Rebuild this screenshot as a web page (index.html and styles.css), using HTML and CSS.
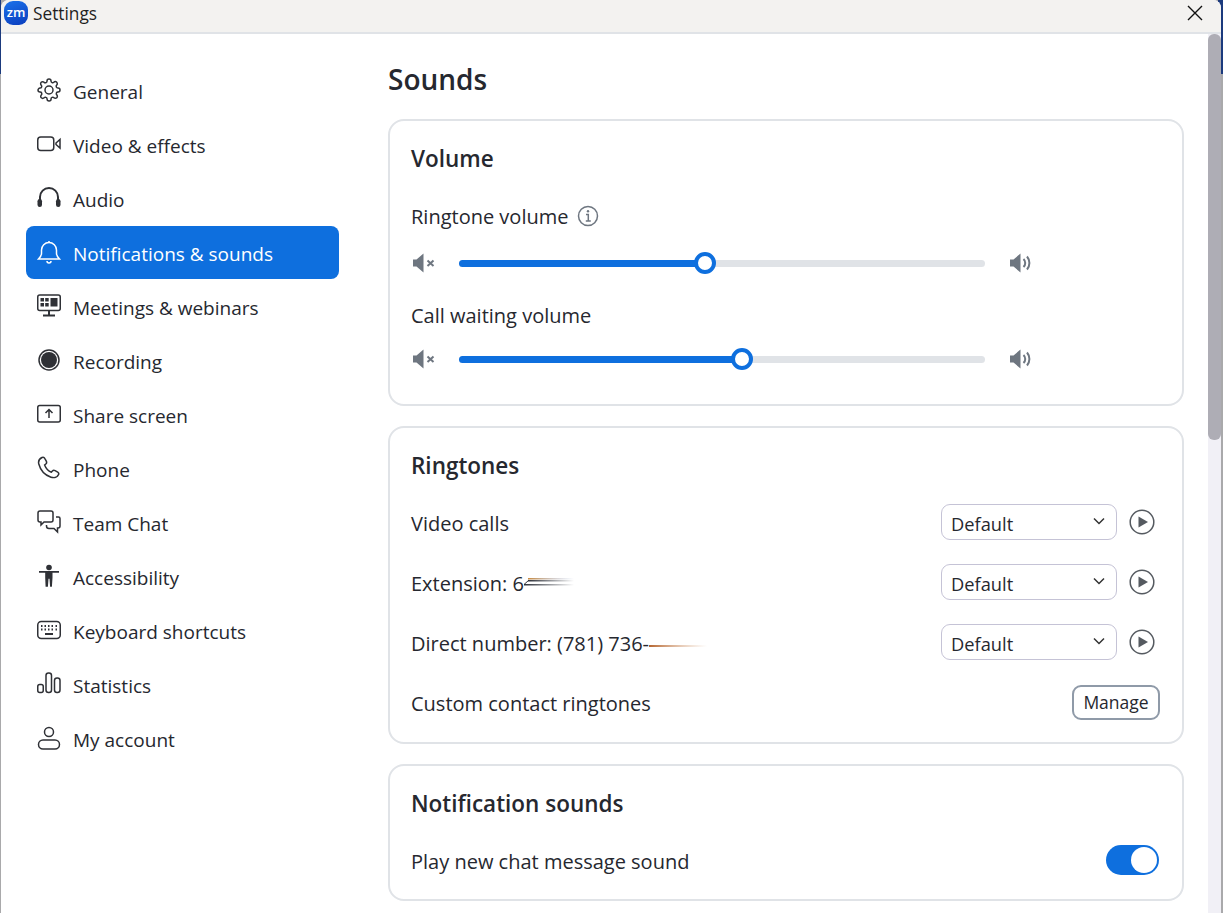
FILE: index.html
```html
<!DOCTYPE html>
<html lang="en">
<head>
    <meta charset="UTF-8">
    <meta name="viewport" content="width=device-width, initial-scale=1.0">
    <title>Settings</title>
    <link rel="stylesheet" href="styles.css">
</head>
<body>
    <div class="desktop-strip strip-left"></div>
    <div class="desktop-strip strip-right"></div>

    <div class="window">
        <header class="titlebar">
            <div class="app-logo">zm</div>
            <span class="app-name">Settings</span>
            <svg class="close-icon" viewBox="0 0 16 16"><path d="M1 1l14 14M15 1L1 15"/></svg>
        </header>

        <div class="window-body">
            <nav class="sidebar">
                <a class="nav-item">
                    <svg class="nav-icon" viewBox="0 0 24 24"><circle cx="12" cy="12" r="4"/><path d="M19.4 15a1.65 1.65 0 0 0 .33 1.82l.06.06a2 2 0 0 1 0 2.83 2 2 0 0 1-2.83 0l-.06-.06a1.65 1.65 0 0 0-1.82-.33 1.65 1.65 0 0 0-1 1.51V21a2 2 0 0 1-2 2 2 2 0 0 1-2-2v-.09A1.65 1.65 0 0 0 9 19.4a1.65 1.65 0 0 0-1.82.33l-.06.06a2 2 0 0 1-2.83 0 2 2 0 0 1 0-2.83l.06-.06a1.65 1.65 0 0 0 .33-1.82 1.65 1.65 0 0 0-1.51-1H3a2 2 0 0 1-2-2 2 2 0 0 1 2-2h.09A1.65 1.65 0 0 0 4.6 9a1.65 1.65 0 0 0-.33-1.82l-.06-.06a2 2 0 0 1 0-2.83 2 2 0 0 1 2.83 0l.06.06a1.65 1.65 0 0 0 1.82.33H9a1.65 1.65 0 0 0 1-1.51V3a2 2 0 0 1 2-2 2 2 0 0 1 2 2v.09a1.65 1.65 0 0 0 1 1.51 1.65 1.65 0 0 0 1.82-.33l.06-.06a2 2 0 0 1 2.83 0 2 2 0 0 1 0 2.83l-.06.06a1.65 1.65 0 0 0-.33 1.82V9a1.65 1.65 0 0 0 1.51 1H21a2 2 0 0 1 2 2 2 2 0 0 1-2 2h-.09a1.65 1.65 0 0 0-1.51 1z"/></svg>
                    <span>General</span>
                </a>
                <a class="nav-item">
                    <svg class="nav-icon" viewBox="0 0 24 24"><rect x="0.75" y="5" width="16" height="13.5" rx="3"/><path d="M19 11l4-3.5v8.5l-4-3.5z"/></svg>
                    <span>Video &amp; effects</span>
                </a>
                <a class="nav-item">
                    <svg class="nav-icon" viewBox="0 0 24 24"><path d="M3 16v-5a9 9 0 0 1 18 0v5" stroke-width="2"/><rect class="solid" x="0.5" y="13" width="4.5" height="8" rx="2.2"/><rect class="solid" x="19" y="13" width="4.5" height="8" rx="2.2"/></svg>
                    <span>Audio</span>
                </a>
                <a class="nav-item active">
                    <svg class="nav-icon" viewBox="0 0 24 24"><path d="M12 2.5a7.5 7.5 0 0 0-7.5 7.5v3.5c0 2.2-1.2 3.6-3 5.5h21c-1.800-1.900-3-3.300-3-5.500V10A7.500 7.500 0 0 0 12 2.500z"/><path d="M12 1v1.500M10 21a2 2 0 0 0 4 0"/></svg>
                    <span>Notifications &amp; sounds</span>
                </a>
                <a class="nav-item">
                    <svg class="nav-icon" viewBox="0 0 24 24"><rect x="0.75" y="1" width="22.500" height="15.500" rx="2"/><path class="solid" d="M3.500 4h3.500v3.500h-3.500zM8.200 4h3.500v3.500h-3.500zM3.500 9h3.500v3.500h-3.500zM8.200 9h3.500v3.500h-3.500zM13.500 4h7v8.500h-7z"/><path d="M12 16.500v4.500M6 21.500h12" stroke-width="2"/></svg>
                    <span>Meetings &amp; webinars</span>
                </a>
                <a class="nav-item">
                    <svg class="nav-icon" viewBox="0 0 24 24"><circle cx="12" cy="12" r="10"/><circle class="solid" cx="12" cy="12" r="8"/></svg>
                    <span>Recording</span>
                </a>
                <a class="nav-item">
                    <svg class="nav-icon" viewBox="0 0 24 24"><rect x="0.75" y="3.500" width="22.500" height="16.500" rx="2"/><path d="M12 16V8M8.500 11L12 7.500l3.500 3.500"/></svg>
                    <span>Share screen</span>
                </a>
                <a class="nav-item">
                    <svg class="nav-icon" viewBox="0 0 24 24"><path d="M5 1.500C2.500 2.800 1 5 1.800 8c1.600 6 6.200 11.200 12.200 13.200 3.200 1 6.500.2 7.600-2.600.4-1-.1-1.900-.9-2.400l-2.600-1.500c-1-.6-2-.4-2.700.4l-1 1.100c-3-1.200-5.600-4-6.800-7.200l1.200-1c.8-.7 1-1.700.6-2.600L7.900 2.600C7.300 1.400 6 1 5 1.500z"/></svg>
                    <span>Phone</span>
                </a>
                <a class="nav-item">
                    <svg class="nav-icon" viewBox="0 0 24 24"><path d="M3 1h11a2 2 0 0 1 2 2v7a2 2 0 0 1-2 2H7l-3 3v-3H3a2 2 0 0 1-2-2V3a2 2 0 0 1 2-2z"/><path d="M19 7h2.500A1.500 1.500 0 0 1 23 8.500V16a2 2 0 0 1-2 2h-.5v4l-3.500-3.500h-5a2.500 2.500 0 0 1-2.500-2.500v-1"/></svg>
                    <span>Team Chat</span>
                </a>
                <a class="nav-item">
                    <svg class="nav-icon" viewBox="0 0 24 24"><circle class="solid" cx="12" cy="3.500" r="2.800"/><path class="solid" d="M2 7h20v1.800h-6.500v5l-.6 9h-1.800l-.6-8h-1l-.6 8H8.600l-.4-9v-5H2z"/></svg>
                    <span>Accessibility</span>
                </a>
                <a class="nav-item">
                    <svg class="nav-icon" viewBox="0 0 24 24"><rect x="0.75" y="3.500" width="22.500" height="17" rx="3.500"/><path d="M4 8h1.500M7.500 8H9M11 8h1.500M14.500 8H16M18.500 8H20M4 11.500h1.500M7.500 11.500H9M11 11.500h1.500M14.500 11.500H16M18.500 11.500H20" stroke-width="1.800"/><path d="M8 16h8" stroke-width="2"/></svg>
                    <span>Keyboard shortcuts</span>
                </a>
                <a class="nav-item">
                    <svg class="nav-icon" viewBox="0 0 24 24"><rect x="0.75" y="12.500" width="5.500" height="8" rx="2"/><rect x="9" y="1" width="5.500" height="19.500" rx="2.500"/><rect x="17.500" y="6" width="5.500" height="14.500" rx="2.500"/></svg>
                    <span>Statistics</span>
                </a>
                <a class="nav-item">
                    <svg class="nav-icon" viewBox="0 0 24 24"><circle cx="12" cy="6" r="4.500"/><rect x="1.500" y="14" width="21" height="9" rx="4.500"/></svg>
                    <span>My account</span>
                </a>
            </nav>

            <main class="content">
                <h1>Sounds</h1>

                <section class="card">
                    <h2>Volume</h2>
                    <div class="label-row label-row-first">
                        Ringtone volume
                        <svg class="info-icon" viewBox="0 0 22 22"><circle cx="11" cy="11" r="9.500"/><path d="M9 9.500h2.300V16M8.800 16h5"/><circle class="dot" cx="11" cy="6.300" r="1.200"/></svg>
                    </div>
                    <div class="slider-row">
                        <svg class="mute-icon" viewBox="0 0 24 20"><path class="cone" d="M1 6.500h3.500L11.500.5v19l-7-6H1z"/><path class="cross" d="M15.500 7.500l6 5.500M21.500 7.500l-6 5.500"/></svg>
                        <div class="slider">
                            <div class="slider-fill" style="width: 46.8%"><span class="slider-thumb"></span></div>
                        </div>
                        <svg class="speaker-icon" viewBox="0 0 24 20"><path class="cone" d="M1 6.500h3.500L11.500.5v19l-7-6H1z"/><path class="wave" d="M14.500 6a5.500 5.500 0 0 1 0 8M18 3.500a10 10 0 0 1 0 13"/></svg>
                    </div>
                    <div class="label-row label-row-next">Call waiting volume</div>
                    <div class="slider-row">
                        <svg class="mute-icon" viewBox="0 0 24 20"><path class="cone" d="M1 6.500h3.500L11.500.5v19l-7-6H1z"/><path class="cross" d="M15.500 7.500l6 5.500M21.500 7.500l-6 5.500"/></svg>
                        <div class="slider">
                            <div class="slider-fill" style="width: 53.8%"><span class="slider-thumb"></span></div>
                        </div>
                        <svg class="speaker-icon" viewBox="0 0 24 20"><path class="cone" d="M1 6.500h3.500L11.500.5v19l-7-6H1z"/><path class="wave" d="M14.500 6a5.500 5.500 0 0 1 0 8M18 3.500a10 10 0 0 1 0 13"/></svg>
                    </div>
                </section>

                <section class="card card-ringtones">
                    <h2>Ringtones</h2>
                    <div class="setting-row">
                        <span>Video calls</span>
                        <div class="ringtone-picker">
                            <div class="select">Default<svg class="chevron" viewBox="0 0 12 8"><path d="M1 1.500l5 5 5-5"/></svg></div>
                            <svg class="play-icon" viewBox="0 0 26 26"><circle cx="13" cy="13" r="11.800"/><path class="triangle" d="M9.500 7.500L19 13l-9.500 5.500z"/></svg>
                        </div>
                    </div>
                    <div class="setting-row">
                        <span class="redacted-line">Extension: 6<svg class="smear" width="50" height="12" viewBox="0 0 50 12"><defs><linearGradient id="fadeDark"><stop offset="0" stop-color="#2b2f38"/><stop offset="1" stop-color="#2b2f38" stop-opacity="0"/></linearGradient><linearGradient id="fadeWarm"><stop offset="0" stop-color="#c98a3e"/><stop offset="1" stop-color="#7d93c4" stop-opacity="0"/></linearGradient></defs><rect x="4" y="1" width="46" height="1.500" fill="url(#fadeWarm)"/><rect x="4" y="3" width="46" height="1.500" fill="url(#fadeDark)"/><rect x="0" y="7" width="50" height="1.500" fill="url(#fadeDark)"/><path d="M0 7.500L5 3" stroke="#2b2f38"/></svg></span>
                        <div class="ringtone-picker">
                            <div class="select">Default<svg class="chevron" viewBox="0 0 12 8"><path d="M1 1.500l5 5 5-5"/></svg></div>
                            <svg class="play-icon" viewBox="0 0 26 26"><circle cx="13" cy="13" r="11.800"/><path class="triangle" d="M9.500 7.500L19 13l-9.500 5.500z"/></svg>
                        </div>
                    </div>
                    <div class="setting-row">
                        <span class="redacted-line">Direct number: (781) 736-<svg class="smear smear-low" width="58" height="4" viewBox="0 0 58 4"><defs><linearGradient id="fadeBrown"><stop offset="0" stop-color="#b5652f"/><stop offset="1" stop-color="#d8a67e" stop-opacity="0"/></linearGradient></defs><rect width="58" height="2" y="1" fill="url(#fadeBrown)"/></svg></span>
                        <div class="ringtone-picker">
                            <div class="select">Default<svg class="chevron" viewBox="0 0 12 8"><path d="M1 1.500l5 5 5-5"/></svg></div>
                            <svg class="play-icon" viewBox="0 0 26 26"><circle cx="13" cy="13" r="11.800"/><path class="triangle" d="M9.500 7.500L19 13l-9.500 5.500z"/></svg>
                        </div>
                    </div>
                    <div class="setting-row">
                        <span>Custom contact ringtones</span>
                        <button class="btn-manage">Manage</button>
                    </div>
                </section>

                <section class="card">
                    <h2>Notification sounds</h2>
                    <div class="setting-row">
                        <span>Play new chat message sound</span>
                        <div class="toggle"><span class="toggle-knob"></span></div>
                    </div>
                </section>
            </main>

            <div class="scrollbar"><div class="scrollbar-thumb"></div></div>
        </div>
    </div>
</body>
</html>
```

FILE: styles.css
```css
* {
    box-sizing: border-box;
}

html, body {
    height: 100%;
}

body {
    margin: 0;
    overflow: hidden;
    background: #a9a9ab;
    font-family: 'Open Sans', 'Noto Sans', sans-serif;
    font-size: 20px;
    color: #26282f;
}

/* bits of the desktop showing behind the window */
.desktop-strip {
    position: absolute;
    top: 0;
    height: 74px;
    background: #1b3a7d;
}

.strip-left {
    left: 0;
    width: 1px;
}

.strip-right {
    right: 0;
    width: 5px;
}

.window {
    position: relative;
    display: flex;
    flex-direction: column;
    height: 913px;
    margin: 0 2px 0 1px;
    background: white;
    border-radius: 8px 8px 0 0;
    overflow: hidden;
}

.titlebar {
    display: flex;
    align-items: center;
    flex: none;
    height: 34px;
    padding: 0 18px 6px 3px;
    background: #f3f2f0;
    border-bottom: 2px solid #e0e3e7;
}

.app-logo {
    width: 24px;
    height: 24px;
    margin-right: 5px;
    border-radius: 9px;
    background: linear-gradient(160deg, #1c72ea, #0a3dbd);
    color: white;
    font-size: 13px;
    font-weight: 600;
    line-height: 22px;
    text-align: center;
}

.app-name {
    font-size: 17.300px;
    color: #1f1f1f;
}

.close-icon {
    width: 16px;
    height: 16px;
    margin-left: auto;
    fill: none;
    stroke: #111;
    stroke-width: 1.4;
}

.window-body {
    display: flex;
    flex: 1;
    min-height: 0;
}

.sidebar {
    flex: none;
    display: flex;
    flex-direction: column;
    gap: 1px;
    width: 387px;
    padding: 30px 49px 0 25px;
    font-size: 19px;
}

.nav-item {
    display: flex;
    align-items: center;
    gap: 12px;
    height: 53px;
    padding-left: 11px;
    padding-bottom: 1px;
    border-radius: 8px;
}

.nav-item span {
    padding-top: 3px;
}

.nav-item.active {
    background: #0e6fde;
    color: white;
}

.nav-icon {
    flex: none;
    width: 24px;
    height: 24px;
    fill: none;
    stroke: #2f3136;
    stroke-width: 1.5;
}

.nav-icon .solid {
    fill: #2f3136;
    stroke: none;
}

.nav-item.active .nav-icon {
    stroke: white;
}

.content {
    flex: 1;
    min-width: 0;
    padding: 25px 24px 0 0;
}

h1 {
    margin: 0 0 20px;
    font-size: 28px;
    font-weight: 600;
    line-height: 40px;
}

.card {
    margin-bottom: 20px;
    padding: 22px 22px 8px 21px;
    border: 2px solid #e0e3e7;
    border-radius: 16px;
}

.card-ringtones {
    padding-bottom: 9px;
}

h2 {
    margin: 0 0 11px;
    font-size: 22.500px;
    font-weight: 600;
    line-height: 32px;
}

.label-row {
    display: flex;
    align-items: center;
    height: 28px;
    padding-bottom: 2px;
}

.label-row-first {
    gap: 9px;
    height: 34px;
    margin-top: 25px;
}

.label-row-next {
    margin-top: 23px;
}

.info-icon {
    width: 22px;
    height: 22px;
    fill: none;
    stroke: #6e7680;
    stroke-width: 1.5;
}

.info-icon .dot {
    fill: #6e7680;
    stroke: none;
}

.slider-row {
    display: flex;
    align-items: center;
    height: 32px;
    margin: 13px 0 21px;
}

.mute-icon,
.speaker-icon {
    flex: none;
    width: 24px;
    height: 20px;
}

.mute-icon {
    margin-left: 1px;
}

.cone {
    fill: #6e7680;
}

.cross,
.wave {
    fill: none;
    stroke: #6e7680;
    stroke-width: 2;
}

.slider {
    flex: none;
    width: 526px;
    height: 7px;
    margin: 0 24px 0 23px;
    border-radius: 4px;
    background: #e0e3e7;
}

.slider-fill {
    position: relative;
    height: 100%;
    border-radius: 4px;
    background: #0e6fde;
}

.slider-thumb {
    position: absolute;
    top: -8px;
    right: -11px;
    width: 22px;
    height: 22px;
    border: 4px solid #0e6fde;
    border-radius: 50%;
    background: white;
}

.setting-row {
    display: flex;
    align-items: center;
    justify-content: space-between;
    height: 60px;
}

.redacted-line {
    display: inline-flex;
    align-items: center;
}

.smear {
    flex: none;
}

.smear-low {
    margin-top: 6px;
}

.ringtone-picker {
    display: flex;
    align-items: center;
    gap: 12px;
    margin-top: -2px;
    margin-right: 5px;
}

.select {
    display: flex;
    align-items: center;
    justify-content: space-between;
    width: 176px;
    height: 36px;
    padding: 3px 11px 0 9px;
    border: 1.5px solid #c5c3d6;
    border-radius: 9px;
    font-size: 18.300px;
}

.chevron {
    width: 12px;
    height: 8px;
    margin-top: -6px;
    fill: none;
    stroke: #333;
    stroke-width: 1.5;
}

.play-icon {
    width: 26px;
    height: 26px;
    fill: none;
    stroke: #555a60;
    stroke-width: 1.5;
}

.play-icon .triangle {
    fill: #555a60;
    stroke: none;
}

.btn-manage {
    width: 88px;
    height: 35px;
    margin-top: -2px;
    padding: 0;
    border: 2px solid #8f9aa8;
    border-radius: 9px;
    background: white;
    font-family: inherit;
    font-size: 17.500px;
    color: #26282f;
}

.toggle {
    display: flex;
    align-items: center;
    justify-content: flex-end;
    width: 53px;
    height: 30px;
    margin: -2px 1px 0 0;
    padding-right: 2px;
    border-radius: 15px;
    background: #0e6fde;
}

.toggle-knob {
    width: 26px;
    height: 26px;
    border-radius: 50%;
    background: white;
}

.scrollbar {
    flex: none;
    width: 13px;
    background: #f1f0f6;
}

.scrollbar-thumb {
    height: 406px;
    border-radius: 6px;
    background: #aeadb5;
}
```
